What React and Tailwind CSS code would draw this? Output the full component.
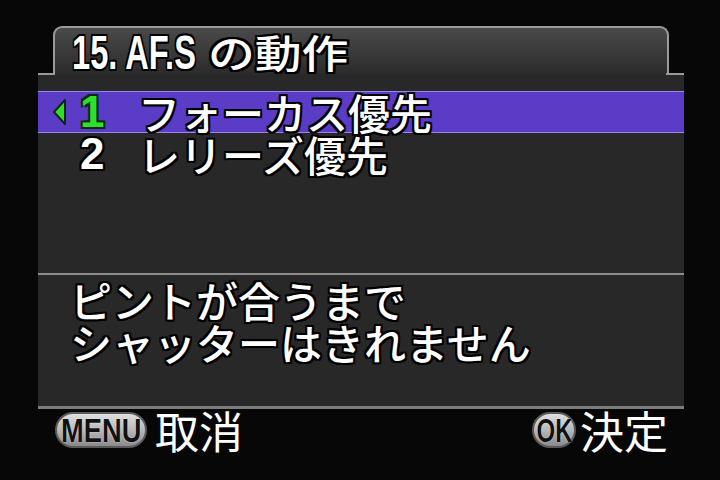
import React from "react";

const jp = "font-['Noto_Sans_CJK_JP','Noto_Sans',sans-serif]";
const outline =
  "[text-shadow:-2px_-2px_0_#000,2px_-2px_0_#000,-2px_2px_0_#000,2px_2px_0_#000,0_2px_0_#000,0_-2px_0_#000,2px_0_0_#000,-2px_0_0_#000]";

function Arrow() {
  return (
    <svg width="16" height="28" viewBox="0 0 16 28" className="block">
      <polygon points="13,2 2,14 13,26" fill="#2ee02e" stroke="#0a2a0a" strokeWidth="2" strokeLinejoin="round" />
    </svg>
  );
}

function Pill({ children, w, sx }) {
  return (
    <div
      className={`flex h-[36px] items-center justify-center rounded-full border-2 border-[#5a5a5a] bg-gradient-to-b from-[#e0e0e0] via-[#b8b8b8] to-[#8a8a8a] ${w}`}
    >
      <span
        className={`inline-block origin-center scale-y-[1.3] ${sx} font-['Liberation_Sans',sans-serif] text-[26px] font-bold leading-none text-[#111] [text-shadow:0_0_1px_#fff]`}
      >
        {children}
      </span>
    </div>
  );
}

export default function App() {
  return (
    <div className="h-[480px] w-[720px] overflow-hidden bg-[#070707] pt-[26px]">
      <div className="ml-[38px] w-[646px]">
        {/* title tab */}
        <div className="mx-[15px] flex h-[47px] items-end rounded-t-[9px] border-x-2 border-t-2 border-[#9a9a9a] bg-gradient-to-b from-[#4a4a4a] to-[#2c2c2c] pl-[17px]">
          <div className={`flex h-[46px] translate-y-[3px] items-center text-white ${outline}`}>
            <span className="w-[136px] whitespace-nowrap">
              <span className="inline-block origin-left scale-x-[0.68] font-['Liberation_Sans',sans-serif] text-[48px] font-bold leading-none">
                15. AF.S
              </span>
            </span>
            <span className="whitespace-nowrap">
              <span className={`inline-block origin-left scale-x-[1.2] ${jp} text-[39px] font-medium leading-none`}>
                の動作
              </span>
            </span>
          </div>
        </div>
        {/* step line */}
        <div className="flex h-[2px]">
          <div className="w-[17px] bg-[#9a9a9a]" />
          <div className="flex-1 bg-[#2a2a2a]" />
          <div className="w-[18px] bg-[#9a9a9a]" />
        </div>
        {/* option list */}
        <div className="flex h-[198px] flex-col bg-[#282828] pt-[16px]">
          <div className="flex h-[42px] items-center border-y border-[#9886e6] bg-[#5a3cc6]">
            <div className="ml-[14px] w-[28px]">
              <Arrow />
            </div>
            <span className="w-[58px] font-['Liberation_Sans',sans-serif] text-[44px] font-bold leading-none text-[#2ee02e] [text-shadow:-2px_-2px_0_#0a2a0a,2px_-2px_0_#0a2a0a,-2px_2px_0_#0a2a0a,2px_2px_0_#0a2a0a]">
              1
            </span>
            <span className={`${jp} text-[42px] font-medium leading-none text-white ${outline}`}>
              フォーカス優先
            </span>
          </div>
          <div className="flex h-[42px] items-center">
            <span className={`ml-[42px] w-[58px] font-['Liberation_Sans',sans-serif] text-[44px] font-bold leading-none text-white ${outline}`}>
              2
            </span>
            <span className={`${jp} text-[42px] font-medium leading-none text-white ${outline}`}>
              レリーズ優先
            </span>
          </div>
        </div>
        <div className="h-[2px] bg-[#8c8c8c]" />
        {/* description */}
        <div className={`h-[131px] bg-[#282828] pl-[32px] pt-[4px] ${jp} text-[42px] font-medium leading-[42px] text-white ${outline}`}>
          <div>ピントが合うまで</div>
          <div>シャッターはきれません</div>
        </div>
        <div className="h-[3px] bg-[#7c7c7c]" />
        {/* footer */}
        <div className="flex h-[42px] items-center justify-between pl-[17px] pr-[16px]">
          <div className="flex items-center gap-[8px]">
            <Pill w="w-[92px]" sx="scale-x-[1.05]">MENU</Pill>
            <span className={`${jp} text-[44px] font-normal leading-none text-white`}>取消</span>
          </div>
          <div className="flex items-center gap-[4px]">
            <Pill w="w-[44px]" sx="scale-x-[0.92]">OK</Pill>
            <span className={`${jp} text-[44px] font-normal leading-none text-white`}>決定</span>
          </div>
        </div>
      </div>
    </div>
  );
}
